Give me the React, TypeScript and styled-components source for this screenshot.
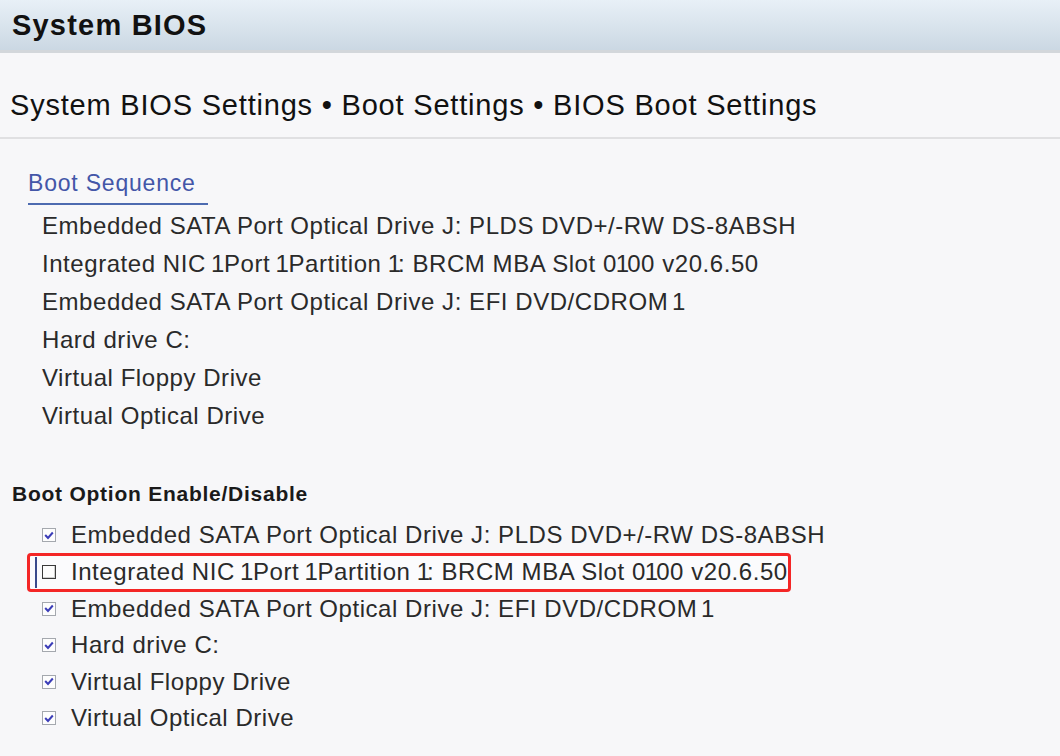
import React from "react";
import styled, { createGlobalStyle } from "styled-components";

const Global = createGlobalStyle`
  html, body { margin: 0; padding: 0; background: #f7f7f9; }
  body { font-family: "Liberation Sans", Arial, sans-serif; }
`;

const Page = styled.div`
  width: 1060px;
  height: 756px;
  overflow: hidden;
  background: #f7f7f9;
`;

const TitleBar = styled.div`
  height: 53px;
  box-sizing: border-box;
  background: linear-gradient(#e8f0f7, #cbd8e3);
  border-bottom: 3px solid #d3d7db;
  display: flex;
  align-items: center;
  padding-left: 12px;
`;

const Title = styled.h1`
  margin: 0;
  font-size: 29px;
  font-weight: bold;
  color: #111;
  letter-spacing: 1.2px;
`;

const Crumbs = styled.div`
  height: 86px;
  box-sizing: border-box;
  border-bottom: 2px solid #e0e0e2;
  display: flex;
  align-items: center;
  padding: 20px 0 0 10px;
  font-size: 29px;
  color: #111;
  letter-spacing: 0.8px;
  white-space: nowrap;
`;

const Content = styled.div`
  padding: 31px 0 0 12px;
`;

const GroupLink = styled.div`
  margin-left: 16px;
  display: inline-block;
  font-size: 23px;
  letter-spacing: 0.8px;
  color: #4356a8;
  padding: 0 12px 6px 0;
  border-bottom: 2px solid #4d6bb0;
`;

const SeqList = styled.ul`
  list-style: none;
  margin: 2px 0 0 0;
  padding: 0 0 0 30px;
`;

const SeqItem = styled.li`
  height: 38px;
  line-height: 38px;
  font-size: 24px;
  letter-spacing: 0.55px;
  color: #2a2a2a;
  white-space: nowrap;
`;

type OneKind = "space" | "colon" | "digit" | "end";

const oneStyle: Record<OneKind, string> = {
  space: "margin-left: -2px; letter-spacing: -3.5px;",
  colon: "margin-left: -1px; letter-spacing: -3px;",
  digit: "margin-left: -1px; letter-spacing: -2px;",
  end: "margin-left: -1px;",
};

const One = styled.span<{ $kind: OneKind }>`
  ${(p) => oneStyle[p.$kind]}
`;

const TightSpace = styled.span`
  letter-spacing: -2px;
`;

const SectionTitle = styled.div`
  margin-top: 47px;
  font-size: 21px;
  line-height: 24px;
  font-weight: bold;
  color: #1a1a1a;
  letter-spacing: 0.75px;
`;

const OptList = styled.div`
  margin-top: 11px;
  display: flex;
  flex-direction: column;
`;

const OptRow = styled.div<{ $focused?: boolean }>`
  height: ${(p) => (p.$focused ? "39px" : "36.6px")};
  margin: ${(p) => (p.$focused ? "-1px 0 -1.3px 15px" : "0 0 0 15px")};
  display: flex;
  align-items: center;
  gap: 15px;
  box-sizing: border-box;
  width: 764px;
  padding-left: ${(p) => (p.$focused ? "12px" : "15px")};
  font-size: 24px;
  letter-spacing: 0.55px;
  color: #2a2a2a;
  white-space: nowrap;
  position: relative;
  ${(p) =>
    p.$focused
      ? `
    border: 3px solid #f42626;
    border-radius: 4px;
    background: #fbfbfd;
  `
      : ""}
`;

const FocusBar = styled.span`
  position: absolute;
  left: 5px;
  top: 1px;
  bottom: 1px;
  width: 2px;
  background: #3a4a8c;
`;

const Box = styled.span<{ $checked?: boolean }>`
  width: 14px;
  height: 14px;
  flex: none;
  box-sizing: border-box;
  border: 1px solid ${(p) => (p.$checked ? "#a4a8ae" : "#3a3a3a")};
  background: #fdfdfd;
  display: flex;
  align-items: center;
  justify-content: center;
  ${(p) => (p.$checked ? "" : "box-shadow: inset -1px -1px 0 #cfcfcf;")}
`;

const Check = () => (
  <svg width="10" height="9" viewBox="0 0 10 9">
    <path d="M1.2 4 L4 7 L8.8 1.5" fill="none" stroke="#3b3db8" strokeWidth="2" />
  </svg>
);

const Label = ({ text }: { text: string }) => {
  const tokens = text.split(/( 1$|1 |1)/).filter(Boolean);
  return (
    <span>
      {tokens.map((t, i) => {
        if (t === " 1")
          return (
            <React.Fragment key={i}>
              <TightSpace> </TightSpace>
              <One $kind="end">1</One>
            </React.Fragment>
          );
        if (t === "1 ")
          return (
            <One key={i} $kind="space">
              1{" "}
            </One>
          );
        if (t === "1") {
          const next = tokens[i + 1] || "";
          return (
            <One key={i} $kind={next.startsWith(":") ? "colon" : "digit"}>
              1
            </One>
          );
        }
        return <React.Fragment key={i}>{t}</React.Fragment>;
      })}
    </span>
  );
};

const bootItems = [
  "Embedded SATA Port Optical Drive J: PLDS DVD+/-RW DS-8ABSH",
  "Integrated NIC 1 Port 1 Partition 1: BRCM MBA Slot 0100 v20.6.50",
  "Embedded SATA Port Optical Drive J: EFI DVD/CDROM 1",
  "Hard drive C:",
  "Virtual Floppy Drive",
  "Virtual Optical Drive",
];

export default function App() {
  return (
    <Page>
      <Global />
      <TitleBar>
        <Title>System BIOS</Title>
      </TitleBar>
      <Crumbs>System BIOS Settings • Boot Settings • BIOS Boot Settings</Crumbs>
      <Content>
        <GroupLink>Boot Sequence</GroupLink>
        <SeqList>
          {bootItems.map((t) => (
            <SeqItem key={t}>
              <Label text={t} />
            </SeqItem>
          ))}
        </SeqList>
        <SectionTitle>Boot Option Enable/Disable</SectionTitle>
        <OptList>
          {bootItems.map((t, i) => {
            const focused = i === 1;
            return (
              <OptRow key={t} $focused={focused}>
                {focused && <FocusBar />}
                <Box $checked={!focused}>{!focused && <Check />}</Box>
                <Label text={t} />
              </OptRow>
            );
          })}
        </OptList>
      </Content>
    </Page>
  );
}
